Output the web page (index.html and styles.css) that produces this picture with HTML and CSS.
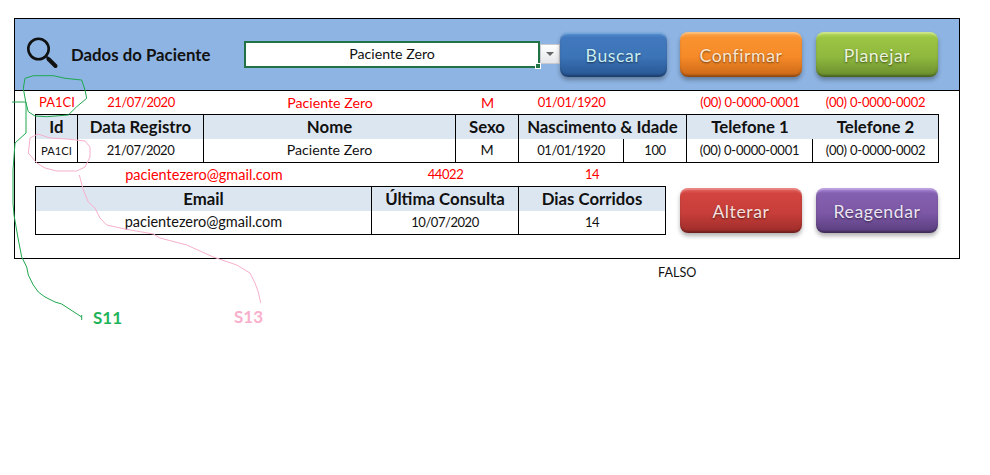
FILE: index.html
```html
<!DOCTYPE html>
<html lang="pt">
<head>
<meta charset="utf-8">
<title>Dados do Paciente</title>
<link rel="stylesheet" href="styles.css">
</head>
<body>
<main class="sheet">
  <header class="top">
    <svg class="lens" width="34" height="34" viewBox="0 0 34 34"><circle cx="12.5" cy="12" r="10.2" fill="none" stroke="#111" stroke-width="2.6"/><path d="M20.5 20l2 1" stroke="#111" stroke-width="2" fill="none"/><path d="M22.5 22L29.5 29" stroke="#111" stroke-width="4" stroke-linecap="round" fill="none"/></svg>
    <h1 class="title">Dados do Paciente</h1>
    <div class="combo">
      <div class="combo-value">Paciente Zero<span class="handle"></span></div>
      <div class="combo-arrow"><span></span></div>
    </div>
    <div class="btn btn-blue">Buscar</div>
    <div class="btn btn-orange">Confirmar</div>
    <div class="btn btn-green">Planejar</div>
  </header>
  <section class="body">
    <div class="row6 red">
      <span class="pid">PA1CI</span><span class="date">21/07/2020</span><span class="txt">Paciente Zero</span><span class="txt">M</span><span class="date">01/01/1920</span><span></span><span class="phone">(00) 0-0000-0001</span><span class="phone">(00) 0-0000-0002</span>
    </div>
    <div class="table">
      <div class="row6 head">
        <b class="sep">Id</b><b class="sep">Data Registro</b><b class="sep">Nome</b><b class="sep">Sexo</b><b class="sep wide">Nascimento &amp; Idade</b><b class="t1">Telefone 1</b><b>Telefone 2</b>
      </div>
      <div class="row6 cells">
        <span class="sep small">PA1CI</span><span class="sep date">21/07/2020</span><span class="sep txt">Paciente Zero</span><span class="sep txt">M</span><span class="sep date">01/01/1920</span><span class="sep date">100</span><span class="sep phone">(00) 0-0000-0001</span><span class="phone">(00) 0-0000-0002</span>
      </div>
    </div>
    <div class="lower">
      <div class="lower-left">
        <div class="row3 red">
          <span class="txt mail">pacientezero@gmail.com</span><span class="date">44022</span><span class="date">14</span>
        </div>
        <div class="table">
          <div class="row3 head"><b class="sep">Email</b><b class="sep">Última Consulta</b><b>Dias Corridos</b></div>
          <div class="row3 cells"><span class="sep txt mail">pacientezero@gmail.com</span><span class="sep date">10/07/2020</span><span class="date">14</span></div>
        </div>
      </div>
      <div class="btn btn-red">Alterar</div>
      <div class="btn btn-purple">Reagendar</div>
    </div>
  </section>
</main>
<p class="falso">FALSO</p>
<svg class="ink" width="990" height="475" viewBox="0 0 990 475" fill="none">
  <path stroke="#1fa84f" d="M25.7 101.7L23.3 88.3 25 78.3 33.3 75.7 53.3 75.7 65 78.3 81.7 80 85 90 86.7 98.3 76.7 106.7 68.3 115 46.7 116.7 35 116 28.3 111.7 25.7 101.7M12 102H26V133L15 143 13 170V203L14 215 18 238 21.7 257 26.7 267 28.3 275 33.3 285 38.3 292 45 297 55 302 61.7 304 81.7 317M81.7 315V320"/>
  <path stroke="#f6b0cc" d="M38 134L30 138 28.3 153 36.7 163 45 168 56.7 171 76.7 171 85 167 90 157 90 147 85 141 66.7 139 50 138 38 134M79.3 175L83.3 190 88.3 202 95 208 100 218 106.7 225 125 229 153.3 234 160 238 186.7 245 213.3 257 236.7 265 250 273 255 283 258.3 292 260.7 303"/>
  <text class="ink-green" x="93" y="324">S11</text>
  <text class="ink-pink" x="234" y="323">S13</text>
</svg>
</body>
</html>
```
FILE: styles.css
```css
* { box-sizing: border-box; }
html, body { margin: 0; padding: 0; background: #fff; }
body { position: relative; width: 990px; height: 475px; overflow: hidden; padding: 18px 0 0 14px; font-family: Lato, "Liberation Sans", sans-serif; font-size: 14.2px; color: #111; }
.sheet { width: 946px; height: 241px; border: 1px solid #000; }
.top { height: 72px; background: #8eb4e3; border-bottom: 1px solid #000; display: flex; align-items: flex-start; position: relative; }
.lens { margin: 18px 0 0 11px; flex: none; }
.title { margin: 26px 0 0 11px; width: 173px; flex: none; font-size: 16.8px; line-height: 20px; font-weight: 700; color: #111; white-space: nowrap; }
.combo { display: flex; margin-top: 22px; width: 316px; flex: none; align-items: flex-start; }
.combo-value { position: relative; width: 297px; height: 27px; background: #fff; border: 2px solid #217346; text-align: center; line-height: 22px; }
.handle { position: absolute; right: -3px; bottom: -3px; width: 6px; height: 6px; background: #217346; border: 1px solid #fff; }
.combo-arrow { width: 20px; height: 20px; margin-top: 3px; background: linear-gradient(#fff, #e4e6ea); border: 1px solid #c6c9ce; display: flex; align-items: center; justify-content: center; }
.combo-arrow span { width: 0; height: 0; border-left: 4px solid transparent; border-right: 4px solid transparent; border-top: 4px solid #666; }
.btn { flex: none; width: 122px; height: 45px; padding-top: 1px; border-radius: 8px; display: flex; align-items: center; justify-content: center; font-size: 17.6px; letter-spacing: .6px; color: #fff; text-shadow: 0 1px 2px rgba(0,0,0,.55); box-shadow: 0 3px 4px rgba(0,0,0,.3), inset 0 -2px 2px rgba(0,0,0,.22), inset 0 2px 1px rgba(255,255,255,.22); }
.top .btn { margin-top: 13px; }
.btn-blue { width: 107px; margin-right: 13px; color: #c9eef2; background: linear-gradient(#5a96d6 0, #4279be 12%, #3c74b8 55%, #2a5a98 92%, #234d85 100%); }
.btn-orange { margin-right: 14px; color: #fde6cf; background: linear-gradient(#fbb05c 0, #f99230 12%, #f68a28 55%, #d26d1a 92%, #b25a16 100%); }
.btn-green { color: #eef5dc; background: linear-gradient(#bfe06a 0, #9cc544 12%, #8fb93e 55%, #6f9430 92%, #5b7b27 100%); }
.btn-red { margin: 0 14px 2px 14px; color: #f8e0de; background: linear-gradient(#e66a66 0, #d24440 12%, #c83e3a 55%, #a32f2c 92%, #8a2825 100%); }
.btn-purple { margin-bottom: 2px; color: #ece4f4; background: linear-gradient(#b08ee0 0, #8460b0 12%, #7c58a6 55%, #5f4284 92%, #4e366e 100%); }
.body { padding: 0 20px; }
.row6, .row3 { display: grid; text-align: center; align-items: center; }
.row6 { grid-template-columns: 42px 126px 252px 63px 105px 63px 126px 125px; }
.row3 { grid-template-columns: 336px 147px 146px; }
.red { height: 23px; margin-left: 1px; color: #f00; line-height: 23px; }
.table { border: 1px solid #000; }
.head { height: 24px; background: #dce6f1; font-size: 16.8px; line-height: 24px; color: #111; }
.cells { height: 23px; line-height: 23px; }
.head b, .cells span { height: 100%; white-space: nowrap; }
.sep { border-right: 1px solid #000; }
.wide { grid-column: span 2; }
.t1 { border-right: 0; }
.small { font-size: 11.2px; }
.pid { font-size: 13px; }
.date { font-size: 13px; letter-spacing: -.45px; }
.phone { font-size: 13px; letter-spacing: -.2px; }
.red .txt, .cells .txt { line-height: 22px; }
.mail { font-size: 14.5px; }
.lower { display: flex; align-items: flex-end; }
.lower-left { width: 631px; flex: none; }
.falso { margin: 6px 0 0 644px; font-size: 12.6px; line-height: 16px; color: #111; }
.ink { position: absolute; left: 0; top: 0; pointer-events: none; }
.ink text { font-family: Lato, sans-serif; font-size: 17px; font-weight: 700; }
.ink-green { fill: #1fb45a; }
.ink-pink { fill: #f8b0cc; }
```
